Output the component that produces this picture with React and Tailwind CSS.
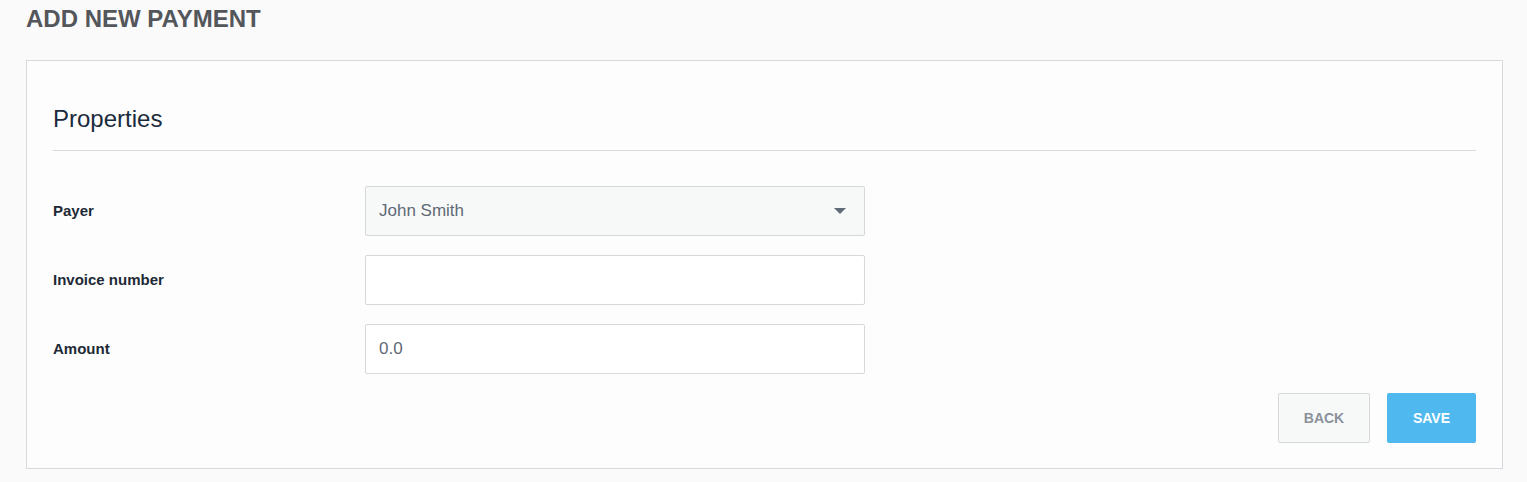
import React from "react";

export default function App() {
  const font = { fontFamily: '"Liberation Sans", Arial, sans-serif' };
  return (
    <div className="min-h-[482px] bg-[#fafafa] pl-[26px] pr-[24px] pt-[5px]" style={font}>
      <h1 className="text-[24px] leading-[28px] font-bold text-[#53565a] uppercase">Add new payment</h1>
      <div className="mt-[27px] border border-[#d6dadf] bg-[#fdfdfd] px-[26px] pt-[40px] pb-[25px]">
        <div className="border-b border-[#d6dadf] pb-[13px]">
          <h2 className="text-[24px] leading-[36px] text-[#1b2b3c]">Properties</h2>
        </div>
        <div className="mt-[35px] flex flex-col gap-[19px]">
          <div className="flex items-center">
            <div className="w-[312px] text-[15px] font-bold text-[#1d2a36]">Payer</div>
            <div className="flex h-[50px] w-[500px] items-center justify-between rounded-[2px] border border-[#d5d9de] bg-[#f7f9f9] pl-[13px] pr-[18px]">
              <span className="text-[17px] text-[#5f6a76]">John Smith</span>
              <svg width="12" height="6" viewBox="0 0 12 6"><path d="M0 0h12L6 6z" fill="#5f6b75" /></svg>
            </div>
          </div>
          <div className="flex items-center">
            <div className="w-[312px] text-[15px] font-bold text-[#1d2a36]">Invoice number</div>
            <div className="h-[50px] w-[500px] rounded-[2px] border border-[#d5d9de] bg-white" />
          </div>
          <div className="flex items-center">
            <div className="w-[312px] text-[15px] font-bold text-[#1d2a36]">Amount</div>
            <div className="flex h-[50px] w-[500px] items-center rounded-[2px] border border-[#d5d9de] bg-white pl-[13px]">
              <span className="text-[17px] text-[#5f6a76]">0.0</span>
            </div>
          </div>
          <div className="flex justify-end gap-[17px]">
            <button className="h-[50px] w-[92px] rounded-[2px] border border-[#d5d9de] bg-[#f7f9f9] text-[14px] font-bold text-[#8a9199]">BACK</button>
            <button className="h-[50px] w-[89px] rounded-[2px] bg-[#4fb9ef] text-[14px] font-bold text-white">SAVE</button>
          </div>
        </div>
      </div>
    </div>
  );
}
